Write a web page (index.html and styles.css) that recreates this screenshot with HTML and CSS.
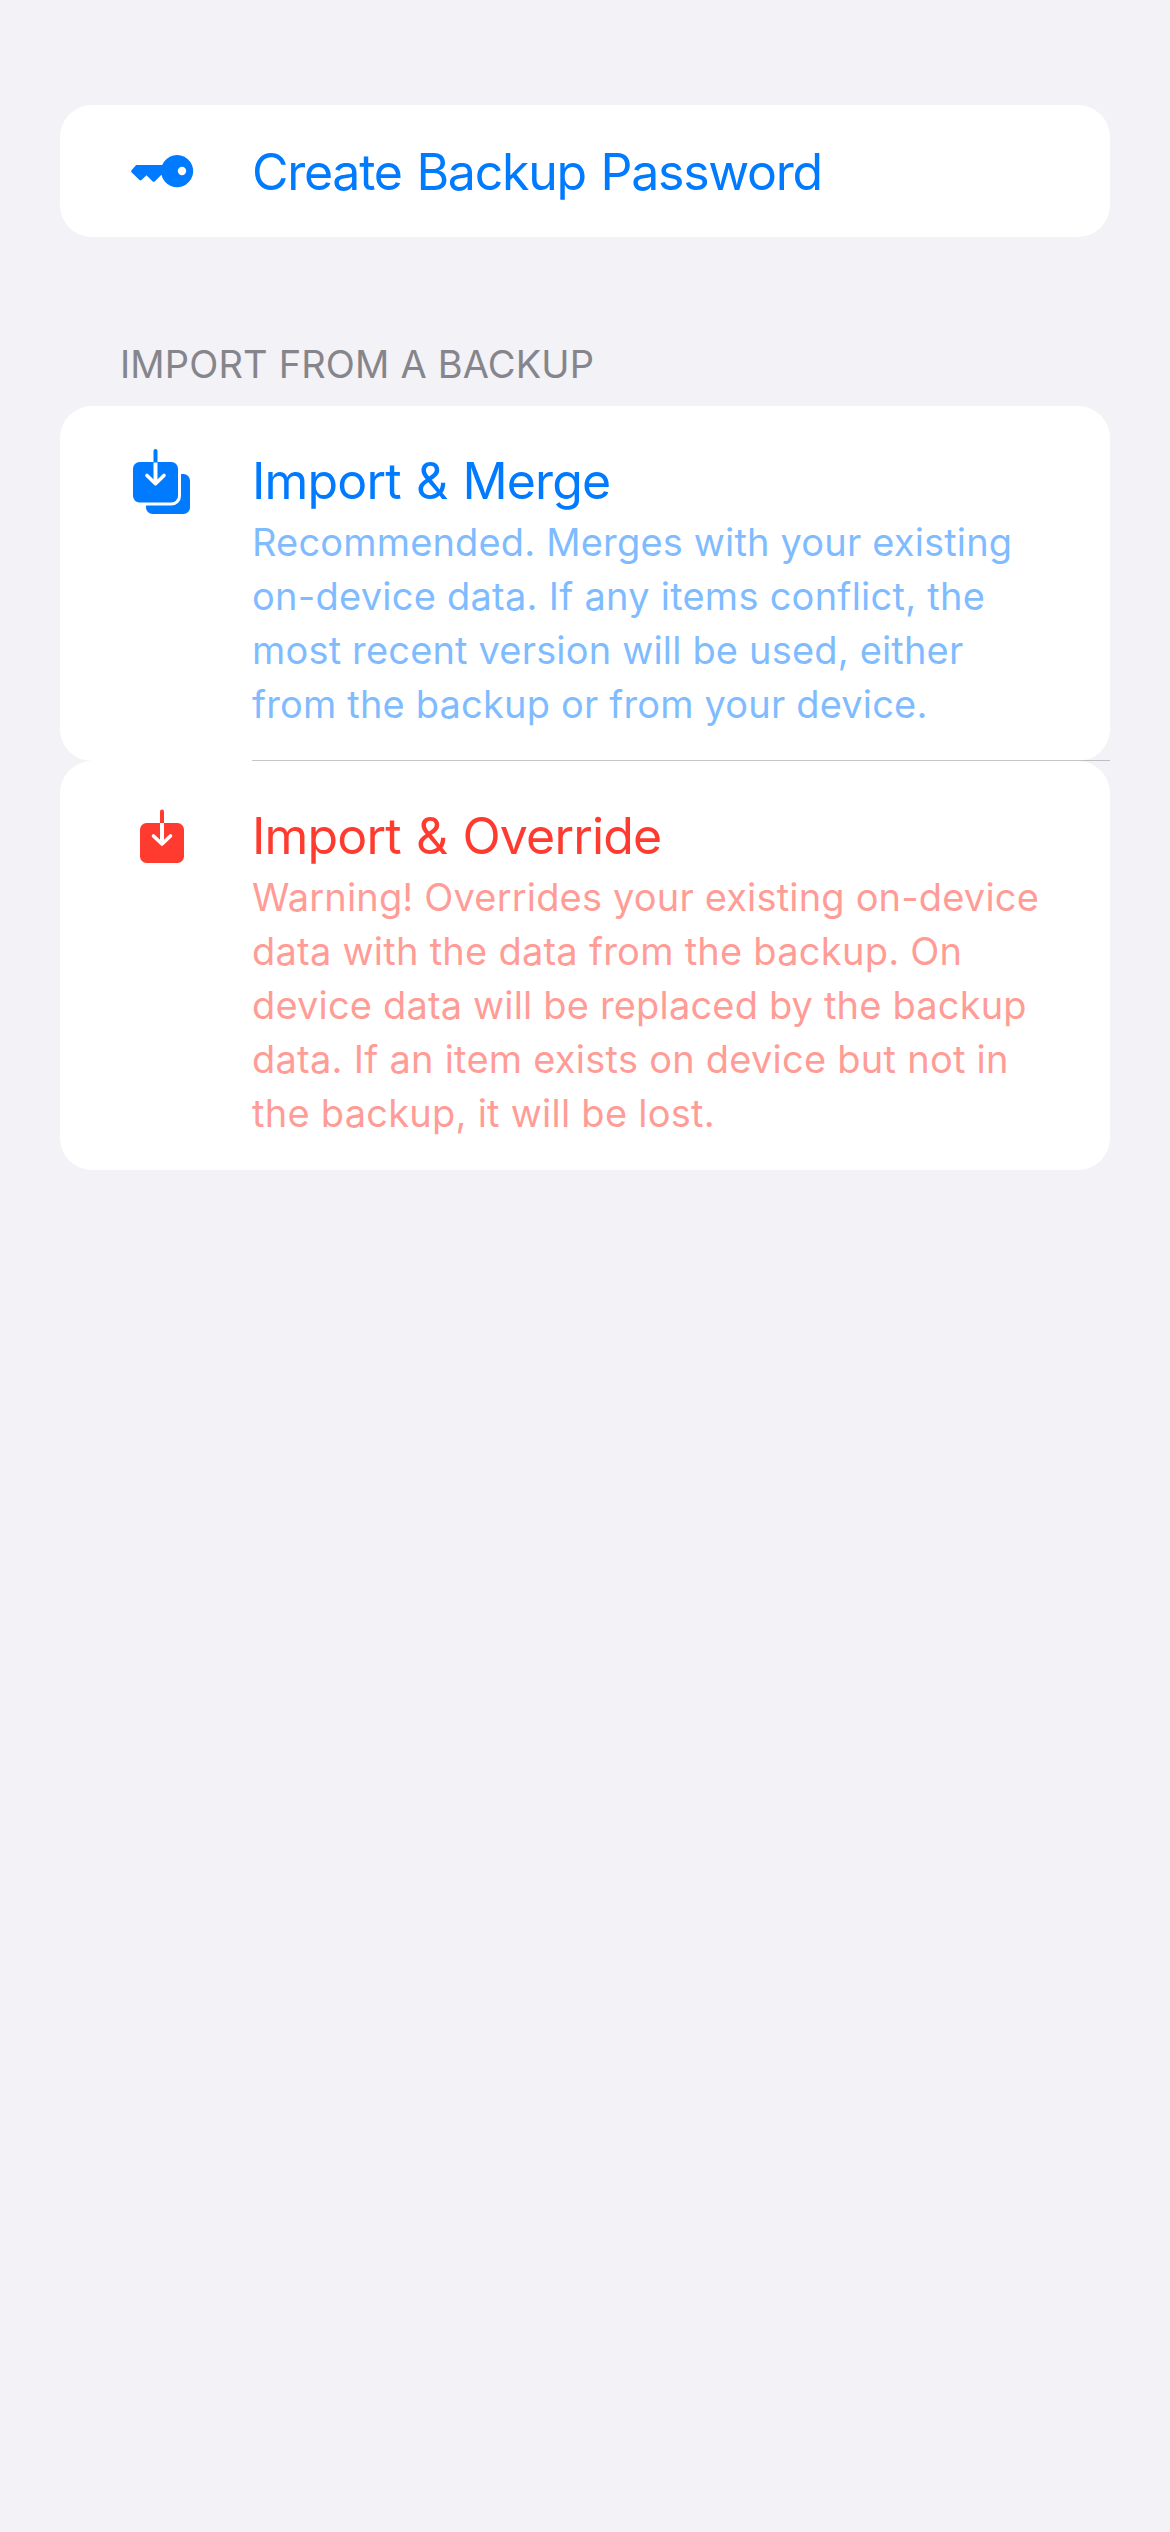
FILE: index.html
```html
<!DOCTYPE html>
<html lang="en">
<head>
<meta charset="utf-8">
<title>Backup</title>
<link rel="stylesheet" href="styles.css">
</head>
<body>
<main class="page">
  <section class="card row create">
    <div class="icon"><svg width="100" height="80" viewBox="0 0 100 80"><path fill="currentColor" fill-rule="evenodd" d="M26.500 35H52.200A16.100 16.100 0 1 1 51.400 44.700L44.700 51.400Q43.700 52.300 42.700 51.400L36.500 45.300L31.500 50Q30.500 50.800 29.500 50L21.500 42.200Q20.700 41.200 21.500 40.200L25.500 35.700Q26 35 26.500 35ZM67.800 41a4.200 4.200 0 1 0 8.400 0a4.200 4.200 0 1 0-8.400 0Z"/></svg></div>
    <div class="title long">Create Backup Password</div>
  </section>
  <h2 class="heading">IMPORT FROM A BACKUP</h2>
  <section class="card row merge">
    <div class="icon"><svg width="100" height="100" viewBox="0 0 100 100"><rect x="36" y="44" width="44" height="40" rx="6.500" fill="currentColor"/><rect x="20" y="29" width="51" height="46.500" rx="9.500" fill="#fff"/><rect x="23" y="32" width="45" height="40.500" rx="6.500" fill="currentColor"/><path d="M45.500 32V21" stroke="currentColor" stroke-width="4" stroke-linecap="round"/><path d="M45.500 32.500V53" stroke="#fff" stroke-width="4"/><path d="M37 45.500L45.500 53.700L54 45.500" fill="none" stroke="#fff" stroke-width="3.600" stroke-linecap="round" stroke-linejoin="round"/></svg></div>
    <div class="body">
      <div class="title">Import &amp; Merge</div>
      <p class="desc"><span class="line">Recommended. Merges with your existing</span><span class="line loose">on-device data. If any items conflict, the</span><span class="line">most recent version will be used, either</span><span class="line">from the backup or from your device.</span></p>
    </div>
  </section>
  <section class="card row override">
    <div class="icon"><svg width="100" height="100" viewBox="0 0 100 100"><rect x="30" y="33" width="44" height="40" rx="6.500" fill="currentColor"/><path d="M52 33V21.500" stroke="currentColor" stroke-width="4" stroke-linecap="round"/><path d="M52 33V53" stroke="#fff" stroke-width="4"/><path d="M43.500 46L52 54L60.500 46" fill="none" stroke="#fff" stroke-width="3.600" stroke-linecap="round" stroke-linejoin="round"/></svg></div>
    <div class="body">
      <div class="title">Import &amp; Override</div>
      <p class="desc"><span class="line">Warning! Overrides your existing on-device</span><span class="line loose">data with the data from the backup. On</span><span class="line">device data will be replaced by the backup</span><span class="line loose">data. If an item exists on device but not in</span><span class="line loose">the backup, it will be lost.</span></p>
    </div>
  </section>
</main>
</body>
</html>
```
FILE: styles.css
```css
* { box-sizing: border-box; margin: 0; }
body { background: #f2f2f7; font-family: Inter, sans-serif; }
.page { padding: 105px 60px 0; }
.card { background: #fff; border-radius: 32px; }
.row { display: flex; }
.icon { width: 192px; flex: none; padding-left: 50px; }
.icon svg { display: block; }
.create { height: 132px; align-items: flex-start; padding-top: 34px; color: #007aff; }
.create .icon { margin-top: -9px; }
.title { font-size: 50px; line-height: 66px; letter-spacing: -0.85px; word-spacing: 2px; white-space: nowrap; }
.long { letter-spacing: -1.27px; }
.heading { height: 169px; padding: 100px 60px 0; font-size: 38px; line-height: 54px; font-weight: 400; color: #85858b; letter-spacing: 0.16px; }
.merge { position: relative; height: 355px; padding-top: 42px; color: #007aff; }
.merge .icon { margin-top: -18px; }
.merge::after { content: ""; position: absolute; left: 192px; right: 0; bottom: 0; height: 1px; background: rgba(60, 60, 67, 0.29); z-index: 1; }
.override { height: 409px; padding-top: 42px; color: #ff3b30; }
.override .icon { margin-top: -13px; }
.desc { padding-top: 1px; font-size: 38px; line-height: 54px; letter-spacing: 0.17px; opacity: .5; white-space: nowrap; }
.line { display: block; }
.loose { letter-spacing: 0.25px; }
```
